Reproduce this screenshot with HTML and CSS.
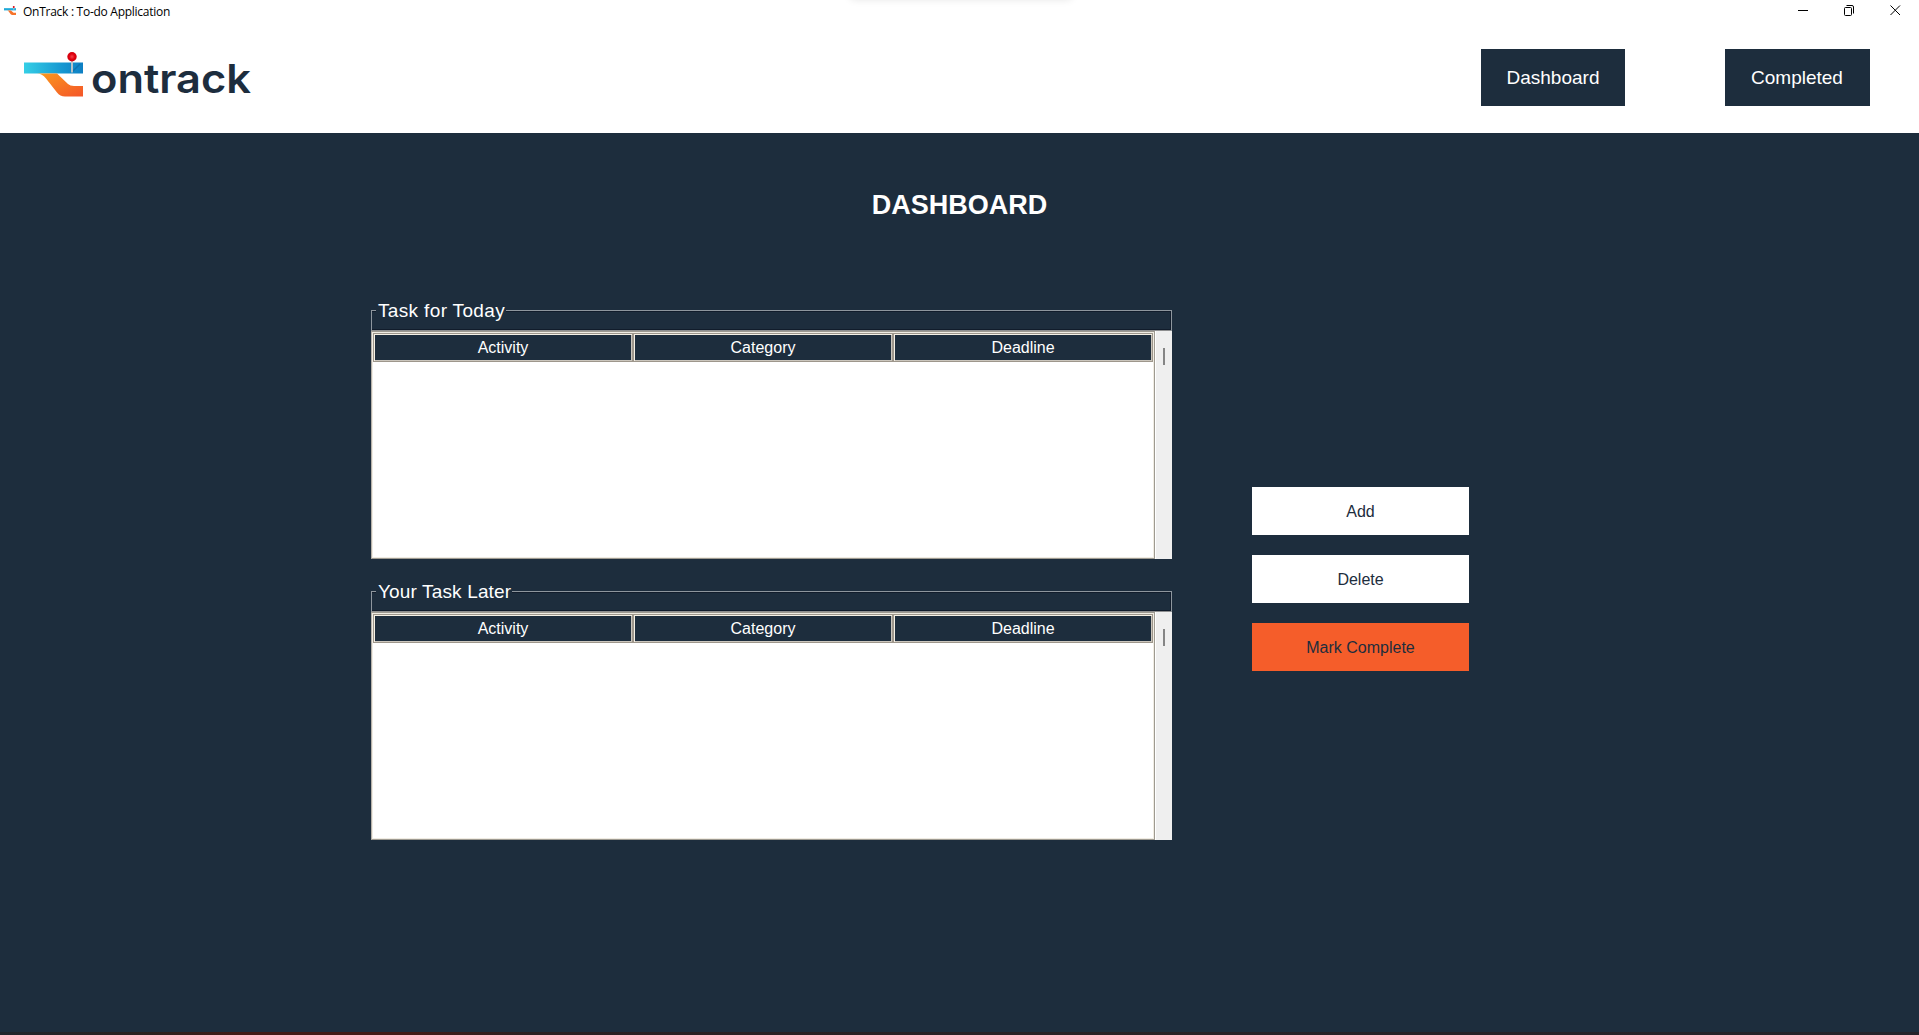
FILE: index.html
```html
<!DOCTYPE html>
<html lang="en">
<head>
<meta charset="utf-8">
<title>OnTrack : To-do Application</title>
<link rel="stylesheet" href="styles.css">
</head>
<body>
<div class="window">
  <div class="titlebar">
    <svg class="app-icon" viewBox="0 0 59 45">
      <path d="M0 11H59V22H0Z" fill="#1fa9d8"/><path d="M15 22H34L47 33Q49 34 53 34H59V45H41Q36 45 33 41L23 27Q20 22 15 22Z" fill="#f7732a"/><path d="M48 10V21" stroke="#ccc" stroke-width="3"/><circle cx="48" cy="5" r="5" fill="#d9000d"/>
    </svg>
    <span class="title">OnTrack : To-do Application</span>
    <span class="shade"></span>
    <div class="controls">
      <svg width="11" height="11" viewBox="0 0 11 11"><path d="M0 5.5H10" /></svg>
      <svg width="11" height="11" viewBox="0 0 11 11"><rect x=".5" y="2.5" width="7" height="8" rx="1"/><path d="M2.5 .5H8Q9.5 .5 9.5 2V8.5"/></svg>
      <svg width="11" height="11" viewBox="0 0 11 11"><path d="M.5 .5L10 10M10 .5L.5 10"/></svg>
    </div>
  </div>
  <header class="header">
    <div class="logo">
      <svg class="mark" width="59" height="45" viewBox="0 0 59 45">
        <defs>
          <linearGradient id="bar"><stop offset="0" stop-color="#35cfe6"/><stop offset=".65" stop-color="#1697d1"/><stop offset="1" stop-color="#0e7fc3"/></linearGradient>
          <linearGradient id="track" x2="1" y2="1"><stop offset="0" stop-color="#fb9a1c"/><stop offset="1" stop-color="#f4562a"/></linearGradient>
          <radialGradient id="pin"><stop offset="0" stop-color="#f5454b"/><stop offset=".6" stop-color="#e0000f"/><stop offset="1" stop-color="#d0000c"/></radialGradient>
        </defs>
        <path d="M0 10.5H59V21.5H0Z" fill="url(#bar)"/>
        <path d="M48 20L56 12" stroke="#0b659f" stroke-width="1.5" opacity=".6"/>
        <path d="M13 21.5H33L44 32Q46 34 50 34H59V44.500H41Q36 44.500 33 40.500L22 26.500Q18 21.500 13 21.500Z" fill="url(#track)"/>
        <path d="M48 8V20.500" stroke="#c9c9c9" stroke-width="1.800"/>
        <circle cx="48" cy="4.700" r="4.700" fill="url(#pin)"/>
      </svg>
      <svg class="wordmark" width="162" height="46"><text x="-1" y="40.5" textLength="160" lengthAdjust="spacingAndGlyphs">ontrack</text></svg>
    </div>
    <nav class="nav">
      <button class="nav-btn">Dashboard</button>
      <button class="nav-btn">Completed</button>
    </nav>
  </header>
  <main class="main">
    <h1>DASHBOARD</h1>
    <div class="content">
      <div class="groups">
        <section class="group">
          <div class="frame"><span class="legend today">Task for Today</span></div>
          <div class="body">
            <div class="table">
              <div class="row"><div class="cell">Activity</div><div class="cell">Category</div><div class="cell">Deadline</div></div>
            </div>
            <div class="scroll"><div class="thumb"></div></div>
          </div>
        </section>
        <section class="group">
          <div class="frame"><span class="legend later">Your Task Later</span></div>
          <div class="body">
            <div class="table">
              <div class="row"><div class="cell">Activity</div><div class="cell">Category</div><div class="cell">Deadline</div></div>
            </div>
            <div class="scroll"><div class="thumb"></div></div>
          </div>
        </section>
      </div>
      <div class="actions">
        <button class="action">Add</button>
        <button class="action">Delete</button>
        <button class="action complete">Mark Complete</button>
      </div>
    </div>
  </main>
  <div class="edge"></div>
</div>
</body>
</html>
```
FILE: styles.css
```css
* { box-sizing: border-box; }
body { margin: 0; font-family: "Liberation Sans", Arial, sans-serif; }
button { border: 0; padding: 0; font-family: inherit; }
.window { display: flex; flex-direction: column; height: 1035px; overflow: hidden; background: #1d2d3d; }

.titlebar { position: relative; display: flex; align-items: center; height: 23px; padding: 0 18px 0 4px; background: #fff; }
.app-icon { width: 12px; height: 11px; margin-bottom: 3px; }
.title { margin-left: 7px; font: 12px/16px "Open Sans", "Noto Sans", sans-serif; letter-spacing: -0.27px; color: #000; }
.controls { display: flex; gap: 35px; margin: 0 0 3px auto; }
.controls svg { fill: none; stroke: #000; stroke-width: 1; }
.shade { position: absolute; left: 850px; top: -10px; width: 222px; height: 9px; border-radius: 8px; box-shadow: 0 0 8px rgba(0,0,0,.12); }

.header { display: flex; justify-content: space-between; align-items: flex-start; height: 110px; padding: 26px 49px 0 24px; background: #fff; }
.logo { display: flex; padding-top: 3px; }
.wordmark { margin-left: 9px; overflow: visible; }
.wordmark text { font: 600 40px "Inter", sans-serif; fill: #1d2d3e; }
.nav { display: flex; gap: 100px; }
.nav-btn { width: 144px; height: 57px; background: #1d2d3d; color: #fff; font-size: 19px; }
.nav-btn:last-child { width: 145px; padding-right: 1px; }

.main { flex: 1; }
h1 { margin: 56px 0 0; height: 32px; text-align: center; color: #fff; font-size: 27px; line-height: 32px; }
.content { display: flex; padding: 78px 0 0 371px; }
.groups { width: 801px; }
.group { height: 281px; padding-top: 11px; }
.frame { height: 22px; border: 1px solid #8e969e; border-bottom: 2px solid #8e8f90; box-shadow: inset -1px 1px #111c2b, inset 0 -1px #111c2b; }
.legend { display: block; width: fit-content; height: 18px; margin: -11px 0 0 4px; padding: 0 1px 0 2px; background: #1d2d3d; color: #fff; font-size: 19px; line-height: 22px; white-space: nowrap; }
.today { letter-spacing: .35px; }
.later { letter-spacing: .15px; }
.body { display: flex; height: 228px; margin-top: -1px; }
.table { width: 784px; padding: 1px; background: #fff; border: 1px solid #9e9a91; border-left-color: #b5b1aa; box-shadow: inset 0 0 0 1px #f0ece3; }
.row { display: grid; grid-template-columns: repeat(3, 260px); height: 28px; }
.cell { border: 1px solid #9e978c; background: #1d2d3d; box-shadow: inset 1px 1px #f5f0e5, inset -1px -1px #cbc6bd; color: #fff; font-size: 16px; line-height: 27px; text-align: center; }
.scroll { flex: 1; padding: 17px 0 0 7px; background: #efefef; border-left: 1px solid #fff; }
.thumb { width: 2px; height: 17px; background: #858585; }
.actions { display: flex; flex-direction: column; gap: 20px; padding: 188px 0 0 80px; }
.action { width: 217px; height: 48px; padding-top: 1px; background: #fff; color: #1d2d3d; font-size: 16px; }
.complete { background: #f55d2a; }
.edge { height: 3px; background: linear-gradient(90deg, #20252c 0, #2b211f 150px, #431b16 240px, #431b16 410px, #2b2022 530px, #25232a 100%); }
```
